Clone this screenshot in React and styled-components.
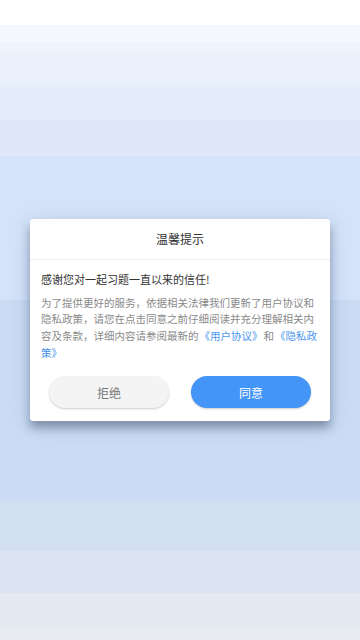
import React from 'react'
import styled, {createGlobalStyle} from 'styled-components'

const GlobalStyle = createGlobalStyle`
html, body {
  margin: 0;
  padding: 0;
}
body {
  font-family: "Noto Sans CJK SC", "Noto Sans", sans-serif;
}
`

const App = () => {
    return(
        <Page>
            <GlobalStyle/>
            <Dialog>
                <Header>温馨提示</Header>
                <Content>
                    <Subtitle>感谢您对一起习题一直以来的信任!</Subtitle>
                    <Body>
                        为了提供更好的服务，依据相关法律我们更新了用户协议和隐私政策，请您在点击同意之前仔细阅读并充分理解相关内容及条款，详细内容请参阅最新的<Link>《用户协议》</Link>和<Link>《隐私政策》</Link>
                    </Body>
                </Content>
                <Actions>
                    <Button>拒绝</Button>
                    <Button primary>同意</Button>
                </Actions>
            </Dialog>
        </Page>
    )
}

const Page = styled.div`
width: 360px;
height: 640px;
display: flex;
align-items: center;
justify-content: center;
background: linear-gradient(
  to bottom,
  #ffffff 0px, #ffffff 25px,
  #f4f7fc 25px, #f4f7fc 42px,
  #eff4fd 42px, #eff4fd 52px,
  #ebf1fc 52px, #ebf1fc 85px,
  #e4edfb 85px, #e4edfb 120px,
  #dee8fa 120px, #dee8fa 156px,
  #d4e3f9 156px, #d4e3f9 300px,
  #cbdcf4 300px, #cbdcf4 501px,
  #d3e0f1 501px, #d3e0f1 551px,
  #dbe4f0 551px, #dbe4f0 593px,
  #e2e9f0 593px, #e2e9f0 629px,
  #e8ebef 629px
);
`

const Dialog = styled.div`
width: 300px;
background: #ffffff;
border-radius: 3px;
box-shadow: 0 7px 10px rgba(70, 85, 110, 0.5), 0 4px 22px rgba(110, 140, 190, 0.25);
display: flex;
flex-direction: column;
`

const Header = styled.div`
height: 40px;
display: flex;
align-items: center;
justify-content: center;
font-size: 12px;
color: #333333;
border-bottom: 1px solid #eeeeee;
`

const Content = styled.div`
padding: 10px 11px 0 11px;
`

const Subtitle = styled.div`
font-size: 11px;
line-height: 18px;
color: #333333;
`

const Body = styled.div`
margin-top: 7px;
font-size: 10.5px;
line-height: 16.7px;
color: #8a8a8a;
`

const Link = styled.span`
color: #4a96ee;
margin: 0 1px;
`

const Actions = styled.div`
display: flex;
justify-content: center;
gap: 22px;
padding: 15px 0 13px 0;
`

const Button = styled.div`
width: 120px;
height: 32px;
border-radius: 16px;
display: flex;
align-items: center;
justify-content: center;
font-size: 12px;
background: ${props => props.primary ? '#4395f7' : '#f4f4f4'};
color: ${props => props.primary ? '#ffffff' : '#777777'};
box-shadow: 0 1px 2px rgba(0, 0, 0, 0.2);
`

export default App
